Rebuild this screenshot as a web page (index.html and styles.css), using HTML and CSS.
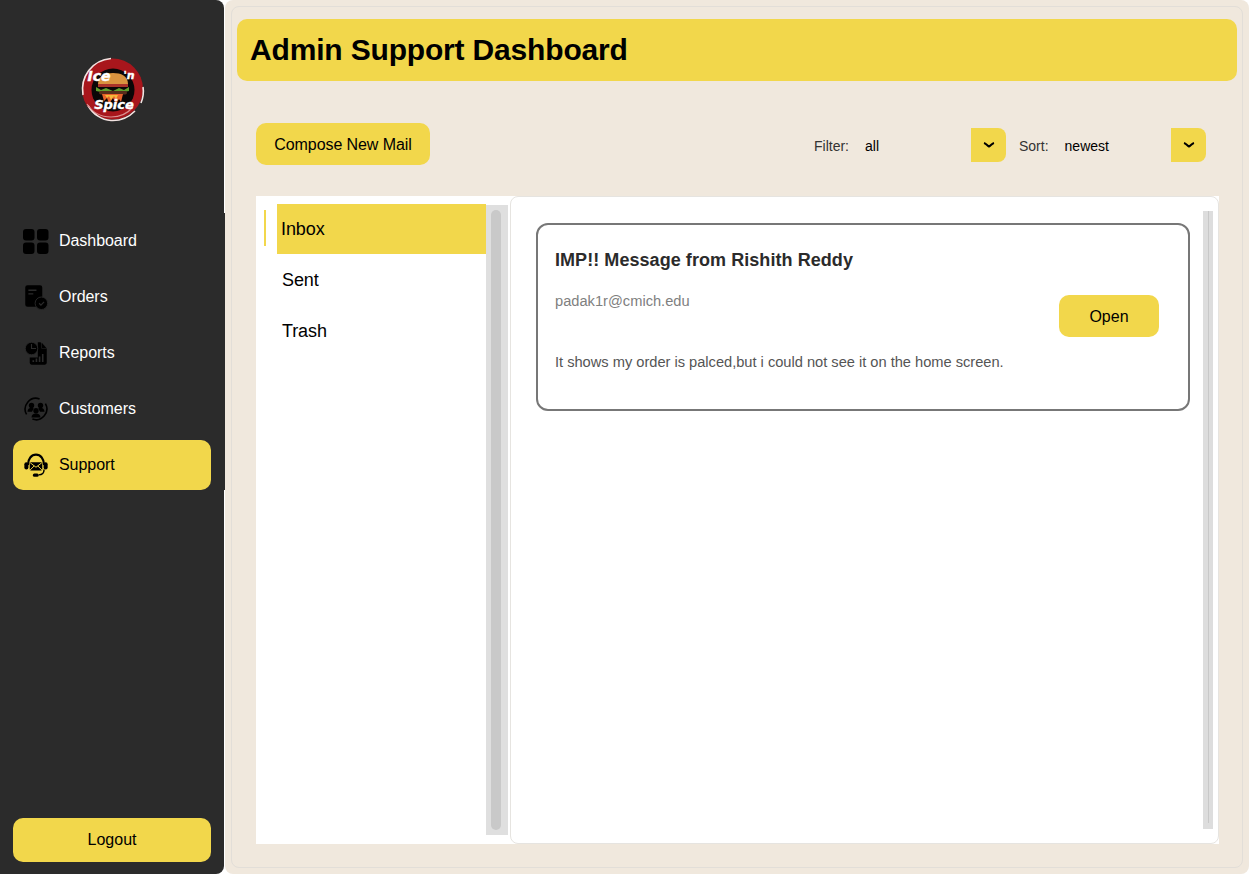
FILE: index.html
```html
<!DOCTYPE html>
<html lang="en">
<head>
<meta charset="utf-8">
<title>Admin Support Dashboard</title>
<link rel="stylesheet" href="styles.css">
</head>
<body>
<div class="app">
  <aside class="sidebar">
    <div class="logo-wrap">
      <svg class="logo" viewBox="0 0 70 70" aria-label="Ice 'n Spice">
        <circle cx="35.500" cy="34" r="30.500" fill="#a8161c"/>
        <path d="M6 40C3 22 15 5 34 3.500M58 56c-7 7-15 10-24 9.500-9-.5-18-6-23-15M66 32c1 6 0 11-2 16" fill="none" stroke="#f3e4e2" stroke-width="1.600"/>
        <path d="M10 49c5 8 14 13 24 13 9 0 17-4 22-10" fill="none" stroke="#d98f8f" stroke-width="1.200"/>
        <circle cx="36" cy="35" r="21.500" fill="#0b0707"/>
        <path d="M21 29c0-8 7-11 15-11s15 3 15 11z" fill="#d9933f"/>
        <rect x="21" y="29" width="30" height="3" fill="#a9332a"/>
        <path d="M19 32l5 3 5-2 7 3 6-3 5 2 5-3v4l-5 1-5-1-6 2-7-2-5 1-5-1z" fill="#5f9f2e"/>
        <rect x="22" y="36" width="28" height="3.500" rx="1.700" fill="#5a2d1b"/>
        <path d="M25 39l2 7 3-3 2 6 4-6 3 6 3-5 2 3 2-8z" fill="#e8622a"/>
        <path d="M28 40l2 3 2-2 2 4 3-4 2 3 2-4z" fill="#f5b83a"/>
        <text class="logo-text" x="22" y="26" text-anchor="middle" font-size="14">Ice</text>
        <text class="logo-text" x="52" y="24" text-anchor="middle" font-size="11">'n</text>
        <text class="logo-text" x="37" y="54" text-anchor="middle" font-size="13">Spice</text>
      </svg>
    </div>
    <nav class="nav">
      <a class="nav-item">
        <svg class="nav-icon" viewBox="0 0 26 26"><rect x="0" y="1" width="11.500" height="11.500" rx="3"/><rect x="14" y="1" width="11.500" height="11.500" rx="3"/><rect x="0" y="14.500" width="11.500" height="11.500" rx="3"/><rect x="14" y="14.500" width="11.500" height="11.500" rx="3"/></svg>
        <span>Dashboard</span>
      </a>
      <a class="nav-item">
        <svg class="nav-icon" viewBox="-1.500 -1.500 29 29"><path d="M1 2.500A2.500 2.500 0 0 1 3.500 0h14A2.500 2.500 0 0 1 20 2.500V24H3.500A2.500 2.500 0 0 1 1 21.500z"/><path d="M4.500 5.500h9M4.500 9.500h5.500" stroke="#2b2b2b" stroke-width="1.500"/><circle cx="19" cy="20" r="7" stroke="#2b2b2b" stroke-width="1"/><path d="M16.500 20l2 2 3.500-3.500" fill="none" stroke="#2b2b2b" stroke-width="1.400"/></svg>
        <span>Orders</span>
      </a>
      <a class="nav-item">
        <svg class="nav-icon" viewBox="-1.500 -1.500 29 29"><path d="M15 1h3l7 7v16a2 2 0 0 1-2 2H8a2 2 0 0 1-2-2v-6h9z"/><path d="M19 1l6 7h-6z" fill="#2b2b2b"/><path d="M19.500 1.500l5 6h-5z"/><circle cx="8" cy="8" r="7" stroke="#2b2b2b" stroke-width="1"/><path d="M8 3v5h5" fill="none" stroke="#2b2b2b" stroke-width="1.200"/><path d="M10 23v-2M13.500 23v-4M17 23v-6M20.500 23v-9" stroke="#2b2b2b" stroke-width="1.800"/></svg>
        <span>Reports</span>
      </a>
      <a class="nav-item">
        <svg class="nav-icon" viewBox="-1.500 -1.500 29 29"><path d="M2.500 19A12 12 0 0 1 17 1.800M23.500 7A12 12 0 0 1 9 24.200" fill="none" stroke="#000" stroke-width="1.800"/><circle cx="8" cy="9" r="3"/><circle cx="18" cy="9" r="3"/><circle cx="13" cy="15" r="3"/><path d="M3.500 16c0-3 2-4.500 4.500-4.500 1 0 2 .3 2.500 1l-2 3.500zM22.500 16c0-3-2-4.500-4.500-4.500-1 0-2 .3-2.500 1l2 3.500zM8 22.500c0-3 2-4.500 5-4.500s5 1.500 5 4.500z"/></svg>
        <span>Customers</span>
      </a>
      <a class="nav-item active">
        <svg class="nav-icon" viewBox="-1.500 -1.500 29 29"><path d="M4 13C4 6 8 1.500 13 1.500S22 6 22 13" fill="none" stroke="#000" stroke-width="2.400"/><rect x="0" y="10" width="4.500" height="8" rx="2.200"/><rect x="21.500" y="10" width="4.500" height="8" rx="2.200"/><rect x="6" y="10" width="14" height="9" rx="1.200"/><path d="M6.500 10.500l6.500 5 6.500-5M6.500 18.500l4.500-4.500M19.500 18.500L15 14" fill="none" stroke="#f2d74b" stroke-width="1.100"/><path d="M22 18c0 4.500-3 6-6 6" fill="none" stroke="#000" stroke-width="1.600"/><rect x="9.500" y="22.500" width="6.500" height="3.500" rx="1.700"/></svg>
        <span>Support</span>
      </a>
    </nav>
    <button class="logout">Logout</button>
  </aside>

  <main class="main">
    <div class="frame">
      <header class="page-header"><h1>Admin Support Dashboard</h1></header>

      <div class="toolbar">
        <button class="btn compose">Compose New Mail</button>
        <div class="filters">
          <div class="select filter-select">
            <span class="select-label">Filter:</span>
            <span class="select-value">all</span>
            <span class="select-arrow"><svg viewBox="0 0 12 6"><path d="M1 1c2 .5 3 2.500 5 3.500C8 3.500 9 1.500 11 1" fill="none" stroke="#000" stroke-width="2"/></svg></span>
          </div>
          <div class="select sort-select">
            <span class="select-label">Sort:</span>
            <span class="select-value">newest</span>
            <span class="select-arrow"><svg viewBox="0 0 12 6"><path d="M1 1c2 .5 3 2.500 5 3.500C8 3.500 9 1.500 11 1" fill="none" stroke="#000" stroke-width="2"/></svg></span>
          </div>
        </div>
      </div>

      <div class="panels">
        <section class="folders">
          <span class="indicator"></span>
          <ul class="folder-list">
            <li class="folder selected">Inbox</li>
            <li class="folder">Sent</li>
            <li class="folder">Trash</li>
          </ul>
          <div class="folder-scroll"><div class="folder-thumb"></div></div>
        </section>
        <section class="messages">
          <article class="card">
            <h2>IMP!! Message from Rishith Reddy</h2>
            <div class="card-mid">
              <p class="email">padak1r@cmich.edu</p>
              <button class="btn open">Open</button>
            </div>
            <p class="body-text">It shows my order is palced,but i could not see it on the home screen.</p>
          </article>
          <div class="msg-scroll"><div class="msg-thumb"></div></div>
        </section>
      </div>
    </div>
  </main>
</div>
</body>
</html>
```

FILE: styles.css
```css
* { box-sizing: border-box; }

html, body {
  margin: 0;
  height: 100%;
  background: #ffffff;
  font-family: "Liberation Sans", Arial, sans-serif;
}

.app {
  display: flex;
  width: 1249px;
  height: 874px;
  overflow: hidden;
}

/* Sidebar */
.sidebar {
  position: relative;
  width: 224px;
  flex: none;
  display: flex;
  flex-direction: column;
  background: #2b2b2b;
  border-radius: 0 8px 8px 0;
  padding: 0 13px 12px 13px;
}

.sidebar::after {
  content: "";
  position: absolute;
  left: 224px;
  top: 213px;
  width: 1px;
  height: 277px;
  background: #2b2b2b;
}

.logo-wrap {
  height: 213px;
  padding-top: 55px;
  display: flex;
  justify-content: center;
  align-items: flex-start;
}

.logo {
  width: 70px;
  height: 70px;
}

.logo-text {
  fill: #ffffff;
  stroke: #ffffff;
  stroke-width: 0.4px;
  font-family: "DejaVu Sans", sans-serif;
  font-weight: 700;
  font-style: italic;
}

.nav {
  display: flex;
  flex-direction: column;
  gap: 6px;
  flex: 1;
  padding-top: 2px;
  margin-top: 1px;
}

.nav-item {
  display: flex;
  align-items: center;
  gap: 10px;
  height: 50px;
  padding-left: 10px;
  border-radius: 10px;
  color: #ffffff;
  font-size: 16px;
  letter-spacing: -0.05px;
}

.nav-item.active {
  background: #f2d74b;
  color: #000000;
}

.nav-icon {
  width: 26px;
  height: 26px;
  flex: none;
  fill: #000000;
}

.logout {
  height: 44px;
  border: 0;
  border-radius: 10px;
  background: #f2d74b;
  color: #000000;
  font: 16px "Liberation Sans", Arial, sans-serif;
}

/* Main */
.main {
  flex: 1;
  margin-left: 1px;
  background: #f0e8dd;
  border-radius: 8px;
  padding: 6px;
}

.frame {
  height: 862px;
  border: 1px solid #e2ded8;
  border-radius: 8px;
  padding: 12px 5px 23px;
  display: flex;
  flex-direction: column;
}

.page-header {
  height: 62px;
  background: #f2d74b;
  border-radius: 10px;
  display: flex;
  align-items: center;
  padding-left: 13px;
}

.page-header h1 {
  margin: 0;
  font-size: 30px;
  font-weight: 700;
  color: #000000;
  letter-spacing: -0.17px;
}

.toolbar {
  display: flex;
  justify-content: space-between;
  align-items: center;
  height: 42px;
  margin: 42px 31px 31px 19px;
}

.btn {
  border: 0;
  background: #f2d74b;
  color: #000000;
  border-radius: 10px;
  padding: 2px 0 0;
  font: 16px "Liberation Sans", Arial, sans-serif;
}

.compose {
  width: 174px;
  height: 42px;
  letter-spacing: -0.08px;
}

.filters {
  display: flex;
  gap: 13px;
  padding-top: 1px;
}

.select {
  display: flex;
  align-items: center;
  height: 34px;
  font-size: 14px;
}

.filter-select { width: 192px; }
.sort-select { width: 187px; }

.select-label {
  padding-top: 2px;
  color: #333333;
}

.select-value {
  flex: 1;
  color: #000000;
  padding: 2px 0 0 16px;
}

.select-arrow {
  width: 35px;
  height: 34px;
  background: #f2d74b;
  border-radius: 0 8px 8px 0;
  display: flex;
  align-items: center;
  justify-content: center;
}

.select-arrow svg {
  width: 12px;
  height: 6px;
}

/* Panels */
.panels {
  flex: 1;
  display: flex;
  margin: 0 18px 0 19px;
  min-height: 0;
  background: #ffffff;
}

.folders {
  position: relative;
  width: 254px;
  flex: none;
  background: #ffffff;
  display: flex;
  padding: 8px 2px 9px 21px;
}

.indicator {
  position: absolute;
  left: 8px;
  top: 14px;
  width: 2px;
  height: 36px;
  background: #f2d74b;
}

.folder-list {
  list-style: none;
  margin: 0;
  padding: 0;
  width: 209px;
  display: flex;
  flex-direction: column;
  gap: 1px;
}

.folder {
  height: 50px;
  display: flex;
  align-items: center;
  padding-left: 5px;
  font-size: 18px;
  letter-spacing: -0.1px;
  color: #000000;
}

.folder.selected {
  background: #f2d74b;
  padding-left: 4px;
}

.folder-scroll {
  width: 22px;
  margin-top: 1px;
  background: #dfdfdf;
  padding: 5px 7px 5px 5px;
}

.folder-thumb {
  height: 100%;
  background: #c9c9c9;
  border-radius: 5px;
}

.messages {
  flex: 1;
  display: flex;
  align-items: flex-start;
  background: #ffffff;
  border: 1px solid #e6e4e0;
  border-radius: 8px;
  padding: 26px 5px 14px 25px;
}

.card {
  width: 654px;
  height: 188px;
  flex: none;
  border: 2px solid #777777;
  border-radius: 12px;
  padding: 24px 29px 0 17px;
}

.card h2 {
  margin: 0;
  font-size: 18px;
  line-height: 22px;
  font-weight: 700;
  letter-spacing: 0.06px;
  color: #2b2b2b;
}

.card-mid {
  display: flex;
  justify-content: space-between;
  align-items: flex-start;
  height: 42px;
  margin-top: 19px;
}

.email {
  margin: 0;
  font-size: 14.67px;
  line-height: 22px;
  color: #808080;
}

.open {
  width: 100px;
  height: 42px;
  margin-top: 5px;
}

.body-text {
  margin: 19px 0 0;
  font-size: 14.67px;
  line-height: 22px;
  letter-spacing: -0.015px;
  color: #555555;
}

.msg-scroll {
  margin-left: 13px;
  margin-top: -12px;
  width: 10px;
  height: 618px;
  background: #dddddd;
  display: flex;
  justify-content: center;
  padding: 0 0 6px;
}

.msg-thumb {
  width: 1px;
  background: #c8c8c8;
}
```
